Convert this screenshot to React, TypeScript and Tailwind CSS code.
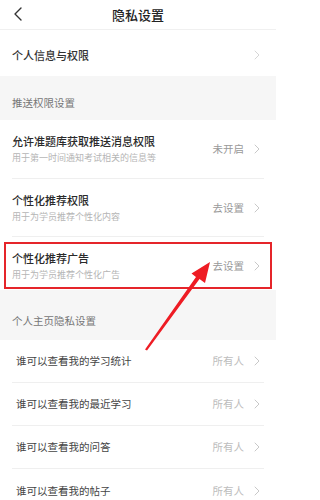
import React from "react";

const font = { fontFamily: '"Noto Sans CJK SC", "Noto Sans", sans-serif' };

function Chevron({ color = "#c8c8c8" }: { color?: string }) {
  return (
    <svg width="6" height="10" viewBox="0 0 6 10" className="shrink-0">
      <path d="M1 1l4 4-4 4" fill="none" stroke={color} strokeWidth="1" strokeLinecap="round" strokeLinejoin="round" />
    </svg>
  );
}

function SectionHeader({ label, h, pt }: { label: string; h: string; pt: string }) {
  return (
    <div className={`bg-[#f6f6f6] px-3 ${h} ${pt}`}>
      <div className="text-[10.5px] leading-[14px] text-[#777]">{label}</div>
    </div>
  );
}

function DetailRow({ title, sub, value }: { title: string; sub: string; value: string }) {
  return (
    <div className="flex items-center justify-between">
      <div className="flex flex-col">
        <div className="text-[11px] font-medium leading-[14px] text-[#2a2a2a]">{title}</div>
        <div className="mt-[4px] text-[9px] leading-[12px] text-[#b5b5b5]">{sub}</div>
      </div>
      <div className="flex items-center gap-[10px] pr-[4px]">
        <span className="text-[10.5px] text-[#999]">{value}</span>
        <Chevron />
      </div>
    </div>
  );
}

function SimpleRow({ title, last }: { title: string; last?: boolean }) {
  return (
    <div className={`mx-3 flex h-[43px] items-center justify-between ${last ? "" : "border-b border-[#efefef]"}`}>
      <span className="pl-[4px] text-[10.5px] text-[#444]">{title}</span>
      <div className="flex items-center gap-[10px] pr-[4px]">
        <span className="text-[10.5px] text-[#bdbdbd]">所有人</span>
        <Chevron />
      </div>
    </div>
  );
}

export default function App() {
  return (
    <div className="relative h-[500px] w-[276px] overflow-hidden bg-white" style={font}>
      {/* header */}
      <div className="relative flex h-[30px] items-center justify-center border-b border-[#f0f0f0]">
        <svg width="10" height="14" viewBox="0 0 10 14" className="absolute left-[13px] top-[7px]">
          <path d="M8 1L2 7l6 6" fill="none" stroke="#333" strokeWidth="1.4" strokeLinecap="round" strokeLinejoin="round" />
        </svg>
        <span className="text-[13px] font-medium text-[#222]">隐私设置</span>
      </div>

      <div className="flex h-[46px] items-center justify-between px-3 pt-[4px]">
        <span className="text-[11px] font-medium text-[#333]">个人信息与权限</span>
        <div className="pr-[4px]">
          <Chevron color="#d6d6d6" />
        </div>
      </div>

      <SectionHeader label="推送权限设置" h="h-[44px]" pt="pt-[20px]" />

      <div className="mx-3 flex h-[59px] flex-col justify-center border-b border-[#efefef]">
        <DetailRow title="允许准题库获取推送消息权限" sub="用于第一时间通知考试相关的信息等" value="未开启" />
      </div>
      <div className="mx-3 flex h-[58px] flex-col justify-center border-b border-[#efefef]">
        <DetailRow title="个性化推荐权限" sub="用于为学员推荐个性化内容" value="去设置" />
      </div>
      <div className="flex h-[53px] items-end px-[4px] pb-[1px]">
        <div className="flex h-[47px] w-full flex-col justify-center border-2 border-[#e5252a] px-[6px]">
          <DetailRow title="个性化推荐广告" sub="用于为学员推荐个性化广告" value="去设置" />
        </div>
      </div>

      <SectionHeader label="个人主页隐私设置" h="h-[50px]" pt="pt-[24px]" />

      <SimpleRow title="谁可以查看我的学习统计" />
      <SimpleRow title="谁可以查看我的最近学习" />
      <SimpleRow title="谁可以查看我的问答" />
      <SimpleRow title="谁可以查看我的帖子" last />

      {/* annotation arrow */}
      <svg className="pointer-events-none absolute inset-0" width="276" height="500" viewBox="0 0 276 500">
        <polygon
          points="210,262 205,283 199.5,279 147,350.6 145,349.4 196,277 191.5,273.5"
          fill="#ee1c24"
        />
      </svg>
    </div>
  );
}
